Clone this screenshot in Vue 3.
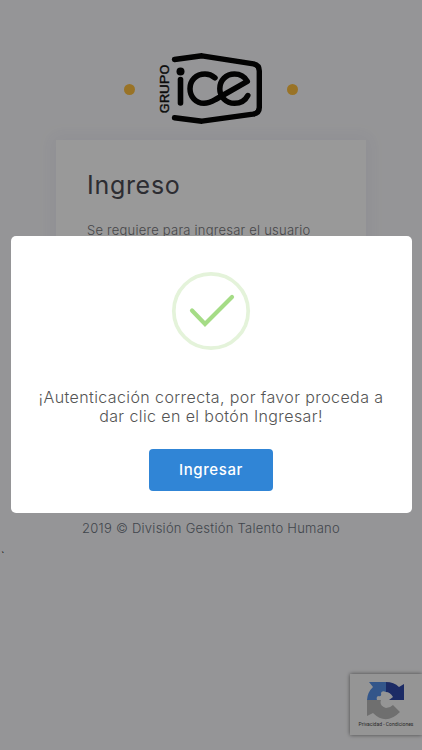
<script setup>
const notice = '2019 © División Gestión Talento Humano'
</script>

<template>
  <div class="page">
    <header class="brand">
      <span class="dot"></span>
      <svg class="logo" width="104" height="72" viewBox="159 52 104 72" fill="none" stroke="#050505" stroke-linecap="round" stroke-linejoin="round">
        <path d="M174.500 59.500 L202 55.800 L253.500 63.800 Q259.300 65 259.300 71 V107.500 Q259.300 113 253 114.200 L202 121.200 L174.500 117.800" stroke-width="5.400" />
        <circle cx="180.500" cy="71.600" r="4" fill="#050505" stroke="none" />
        <path d="M180.500 79.500 V103" stroke-width="5.600" />
        <path d="M215 77.800 C211 74.500 208 74 205 74 C196 74 190 80.500 190 88.700 C190 97 196 103.300 204 103.300 C209 103.300 212 101.500 215.500 99.500 L247.300 81.300 C244.500 76.500 240 74 234.500 74 C226 74 219.800 80.500 219.800 88.700 C219.800 97 226 103.300 234.500 103.300 C241 103.300 245.500 100 247.800 95.500" stroke-width="5.500" />
        <text class="group" transform="translate(169 113.500) rotate(-90)" textLength="49" lengthAdjust="spacingAndGlyphs">GRUPO</text>
      </svg>
      <span class="dot"></span>
    </header>
    <main class="card">
      <h1>Ingreso</h1>
      <p>Se requiere para ingresar el usuario</p>
    </main>
    <footer>{{ notice }}</footer>
    <span class="tick">`</span>
    <aside class="captcha">
      <svg width="40" height="40" viewBox="0 0 40 40">
        <path d="M1 20 A19 19 0 0 1 7 7 L3 2 H20 V12 Q16 10 15 13 Q16 17 12 16 Q10 17 11 20 Z" fill="#558fe6" />
        <path d="M20 2 Q28 2 33 7 L38 4 V20 H23 L27 17 Q24 12 20 12 Z" fill="#3048a8" />
        <path d="M1 20 H11 L15 20 Q13 26 20 28 Q24 28 27 25 L34 32 Q20 46 7 33 L1 36 Z" fill="#b9b9b9" />
      </svg>
      <small>Privacidad - Condiciones</small>
    </aside>
    <div class="backdrop">
      <section class="modal" role="dialog">
        <svg class="success" width="78" height="78" viewBox="0 0 78 78" fill="none">
          <circle cx="39" cy="39" r="37.200" stroke="#e4f3da" stroke-width="3.700" />
          <path d="M20 38.500 L33 52 L60 25" stroke="#a5dc86" stroke-width="4.200" stroke-linecap="round" />
        </svg>
        <div class="message">
          <span>¡Autenticación correcta, por favor proceda a</span>
          <span>dar clic en el botón Ingresar!</span>
        </div>
        <button>Ingresar</button>
      </section>
    </div>
  </div>
</template>

<style>
body { margin: 0; background: #f9f9fc; }
</style>

<style scoped>
.page {
  position: relative;
  box-sizing: border-box;
  width: 422px;
  height: 750px;
  padding-top: 52px;
  overflow: hidden;
  background: #f9f9fc;
  font-family: Inter, "Open Sans", sans-serif;
}
.brand { display: flex; align-items: center; justify-content: center; gap: 24px; height: 74px; box-sizing: border-box; }
.logo { display: block; margin-bottom: 2px; }
.dot { width: 11px; height: 11px; border-radius: 50%; background: #ffc040; }
.group { font: 400 12px Roboto, sans-serif; fill: #151515; stroke: #151515; stroke-width: .35px; }
.card {
  box-sizing: border-box;
  width: 310px;
  height: 348px;
  margin: 14px auto 0;
  padding: 30px 31px;
  background: #fff;
  box-shadow: 0 0 16px 4px rgba(69, 65, 150, .06);
}
h1 { margin: 0; font-size: 25px; font-weight: 400; line-height: 30px; letter-spacing: .7px; color: #4b4c54; white-space: nowrap; }
.card p { margin: 21px 0 0; font-size: 13px; font-weight: 300; line-height: 18px; letter-spacing: .23px; color: #75757a; white-space: nowrap; }
footer { margin-top: 31px; text-align: center; font-size: 13px; font-weight: 300; line-height: 18px; letter-spacing: .25px; color: #6c7480; white-space: nowrap; }
.tick { display: block; margin: 12px 0 0 1px; font-size: 11px; line-height: 14px; color: #222; }
.captcha {
  position: absolute;
  left: 350px;
  top: 674px;
  display: flex;
  flex-direction: column;
  align-items: center;
  box-sizing: border-box;
  width: 72px;
  height: 61px;
  padding-top: 6px;
  background: #f9f9f9;
  box-shadow: 0 0 4px #777;
}
.captcha svg { flex: none; }
.captcha small { margin-top: 1px; font: 5px/7px Roboto, sans-serif; color: #444; white-space: nowrap; }
.backdrop {
  position: absolute;
  inset: 0;
  display: flex;
  align-items: center;
  justify-content: center;
  padding-bottom: 1px;
  background: rgba(0, 0, 0, .4);
}
.modal {
  display: flex;
  flex-direction: column;
  align-items: center;
  box-sizing: border-box;
  width: 401px;
  height: 277px;
  padding-top: 36px;
  border-radius: 5px;
  background: #fff;
}
.success { flex: none; overflow: visible; }
.message { display: flex; flex-direction: column; align-items: center; margin-top: 38px; font-size: 16px; font-weight: 300; line-height: 19px; letter-spacing: .4px; color: #545454; white-space: nowrap; }
button {
  width: 124px;
  height: 42px;
  margin-top: 23px;
  padding: 0;
  border: 0;
  border-radius: 4px;
  background: #3085d6;
  color: #fff;
  font: 500 15px/42px Inter, sans-serif;
  letter-spacing: .6px;
}
</style>
